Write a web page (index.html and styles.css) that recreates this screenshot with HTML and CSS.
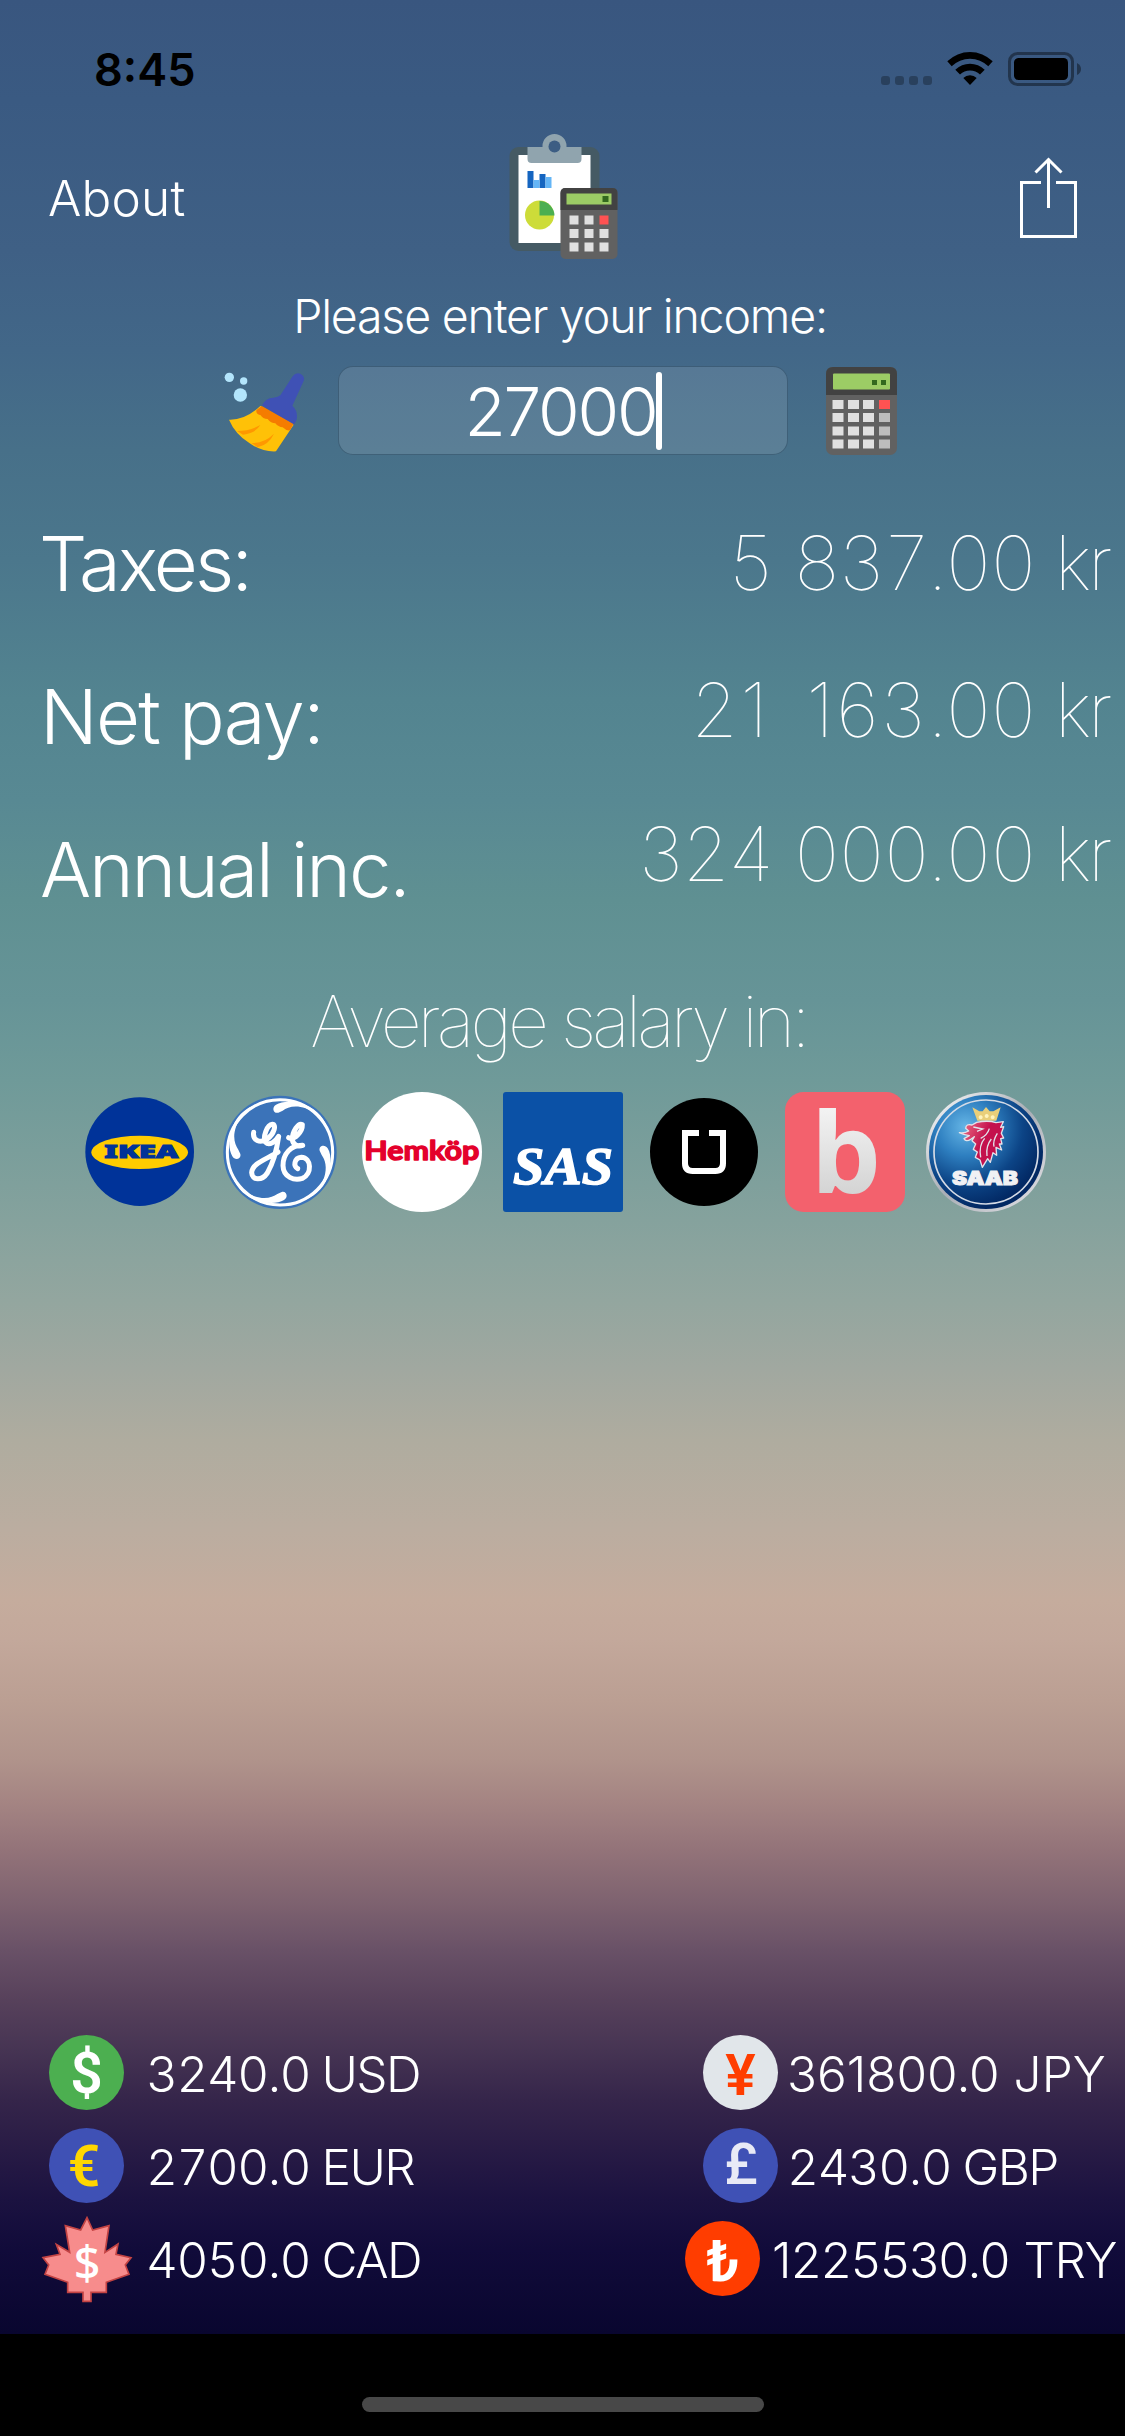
FILE: index.html
```html
<!DOCTYPE html>
<html lang="en">
<head>
<meta charset="utf-8">
<title>Income calculator</title>
<link rel="stylesheet" href="styles.css">
</head>
<body>
<div class="screen">
  <header class="status">
    <span class="time">8:45</span>
    <svg class="status-icons" width="200" height="34" viewBox="0 0 200 34">
      <g fill="#000" fill-opacity=".28"><rect x="0" y="24" width="9" height="9" rx="3"/><rect x="14" y="24" width="9" height="9" rx="3"/><rect x="28" y="24" width="9" height="9" rx="3"/><rect x="42" y="24" width="9" height="9" rx="3"/></g>
      <path d="M66.300 9.300A32.500 32.500 0 0 1 111.700 9.300L107.300 14.200A26 26 0 0 0 70.700 14.200ZM74.300 17.800A21 21 0 0 1 103.700 17.800L99 22.600A14.500 14.500 0 0 0 79 22.600ZM82.300 26A9.500 9.500 0 0 1 95.700 26L89 33Z"/>
      <rect x="128.500" y="1.500" width="63" height="31" rx="8" fill="none" stroke="#000" stroke-opacity=".4" stroke-width="3"/>
      <rect x="133" y="6" width="54" height="22" rx="4.500"/>
      <path d="M196 11Q200 13 200 17T196 23Z" fill-opacity=".4"/>
    </svg>
  </header>

  <nav class="topbar">
    <span class="about">About</span>
    <svg class="emblem" width="150" height="150" viewBox="-2.500 0 150 150">
      <rect x="19" y="26" width="90" height="104" rx="9" fill="#455a64"/>
      <rect x="28" y="34" width="72" height="88" fill="#fff"/>
      <path d="M37 26H52V25A12 12 0 0 1 76 25V26H91V38Q91 42 87 42H41Q37 42 37 38Z" fill="#90a4ae"/>
      <circle cx="64" cy="25.500" r="6" fill="#3c5d83"/>
      <path d="M37 50H43V67H37ZM49 53H55V67H49Z" fill="#1565c0"/>
      <path d="M43 59H49V67H43ZM55 56H61V67H55Z" fill="#64b5f6"/>
      <circle cx="49" cy="94" r="14.500" fill="#cddc39"/>
      <path d="M49 80A15 15 0 0 1 64 94.500H49Z" fill="#4caf50"/>
      <rect x="70" y="67" width="57" height="71" rx="5" fill="#616161"/>
      <path d="M70 89V72Q70 67 75 67H122Q127 67 127 72V89Z" fill="#424242"/>
      <rect x="76" y="72.500" width="45" height="11" fill="#9ccc65"/>
      <rect x="112" y="75" width="6" height="6" fill="#33691e"/>
      <path d="M79 94.500h9v9h-9zM94 94.500h9v9h-9zM79 108h9v9h-9zM94 108h9v9h-9zM109 108h9v9h-9zM79 121.500h9v9h-9zM94 121.500h9v9h-9zM109 121.500h9v9h-9z" fill="#e0e0e0"/>
      <rect x="109" y="94.500" width="9" height="9" fill="#ff5252"/>
    </svg>
    <svg class="share" width="57" height="82" viewBox="0 0 57 82" fill="none" stroke="#fff" stroke-width="3">
      <path d="M21 25.500H1.500V79.500H55.500V25.500H36M28.500 51V2M15.500 15.500L28.500 2.500L41.500 15.500"/>
    </svg>
  </nav>

  <p class="prompt">Please enter your income:</p>

  <div class="income">
    <svg width="90" height="89" viewBox="15 18 270 267">
      <g fill="#b3e5fc"><circle cx="43" cy="52" r="14"/><circle cx="86" cy="63" r="11"/><circle cx="76" cy="105" r="20"/></g>
      <path d="M141 136Q152 113 175 113Q190 111 196 106L233 49Q242 36 256 41Q271 49 266 63L232 137Q246 150 246 168Q246 184 235 195Z" fill="#3f51b5"/>
      <path d="M136 138L236 194L183 274Q140 276 104 250Q60 222 42 179Q90 181 136 138Z" fill="#ffc107"/>
      <path d="M140 138L235 192L225 211Q214 213 203 202Q190 201 181 190Q168 190 158 177Q143 177 137 166Q122 163 124 151Z" fill="#f57c00"/>
      <path d="M66 213Q104 213 136 195Q122 219 84 224ZM110 249Q148 250 177 221Q162 253 128 262Z" fill="#ff9800"/>
    </svg>
    <div class="field"><span class="amount">27000</span><i class="caret"></i></div>
    <svg class="calc" width="71" height="88" viewBox="0 0 71 88">
      <rect width="71" height="88" rx="7" fill="#616161"/>
      <path d="M0 28V7Q0 0 7 0H64Q71 0 71 7V28Z" fill="#424242"/>
      <rect x="7" y="6.500" width="57" height="16" rx="1" fill="#9ccc65"/>
      <path d="M46 13h5v5h-5zM55 13h5v5h-5z" fill="#33691e"/>
      <path d="M6.500 33h11v9h-11zM22 33h11v9h-11zM37 33h11v9h-11zM6.500 46h11v9h-11zM22 46h11v9h-11zM37 46h11v9h-11zM6.500 59.500h11v9h-11zM22 59.500h11v9h-11zM37 59.500h11v9h-11zM6.500 72.500h11v9h-11zM22 72.500h11v9h-11zM37 72.500h11v9h-11z" fill="#e0e0e0"/>
      <path d="M53 46h11v9h-11zM53 59.500h11v9h-11zM53 72.500h11v9h-11z" fill="#bdbdbd"/>
      <rect x="53" y="33" width="11" height="9" fill="#ff5252"/>
    </svg>
  </div>

  <section class="results">
    <div class="labels"><span class="label-taxes">Taxes:</span><span class="label-net">Net pay:</span><span>Annual inc.</span></div>
    <div class="values"><span>5 837.00 kr</span><span><b>21 163</b>.00 kr</span><span>324 000.00 kr</span></div>
  </section>

  <h2 class="average">Average salary in:</h2>

  <div class="brands">
    <svg viewBox="60 66 360 360">
      <circle cx="239" cy="245" r="163" fill="#039"/><ellipse cx="239" cy="247" rx="145" ry="50" fill="#fc0"/>
      <text class="ikea" x="133" y="263" textLength="222" lengthAdjust="spacingAndGlyphs">IKEA</text>
    </svg>
    <svg viewBox="483 66 360 360">
      <circle cx="660" cy="247" r="170" fill="#3b73b9"/>
      <circle cx="660" cy="247" r="158" fill="none" stroke="#fff" stroke-width="9"/>
      <g fill="#fff">
        <path id="swirl" d="M655 128C640 132 634 112 648 104C670 90 715 93 748 110C783 129 803 160 811 205C794 155 768 127 737 115C705 104 682 112 668 122Z"/>
        <use href="#swirl" transform="rotate(90 660 247)"/><use href="#swirl" transform="rotate(180 660 247)"/><use href="#swirl" transform="rotate(270 660 247)"/>
      </g>
      <g fill="none" stroke="#fff" stroke-width="15" stroke-linecap="round" stroke-linejoin="round">
        <path d="M581 187C577 211 600 221 622 207C643 192 650 163 637 163C621 164 607 202 617 217C628 229 648 213 656 199C651 235 641 276 622 309C606 333 576 332 575 308C577 280 615 270 654 246"/>
        <path d="M686 203C704 212 728 184 727 164C715 157 697 185 697 208C698 224 713 231 728 226C693 225 669 251 669 287C670 322 703 333 727 325C757 312 755 263 724 262C702 264 699 290 713 296"/>
      </g>
    </svg>
    <svg viewBox="906 66 360 360">
      <circle cx="1086" cy="246" r="180" fill="#fff"/>
      <text class="hemkop" x="913" y="269" textLength="345" lengthAdjust="spacingAndGlyphs">Hemköp</text>
    </svg>
    <svg viewBox="0 0 120 120">
      <rect width="120" height="120" rx="3" fill="#0b51a6"/>
      <text class="sas" x="10" y="91.500" textLength="100" lengthAdjust="spacingAndGlyphs">SAS</text>
    </svg>
    <svg viewBox="252 66 360 360">
      <circle cx="432" cy="246" r="162"/>
      <path d="M417 189H375V280Q375 303 398 303H466Q489 303 489 280V189H447" fill="none" stroke="#fff" stroke-width="18"/>
    </svg>
    <svg viewBox="675 66 360 360">
      <defs><linearGradient id="steel" x1="0" y1="0" x2="0" y2="1"><stop offset="0" stop-color="#fff"/><stop offset="1" stop-color="#c8c8c8"/></linearGradient></defs>
      <rect x="675" y="66" width="360" height="360" rx="56" fill="#f3616d"/>
      <text class="booking" x="752" y="370" fill="url(#steel)">b</text>
    </svg>
    <svg viewBox="1098 66 360 360">
      <defs>
        <radialGradient id="sea" cx=".32" cy=".28" r=".72"><stop offset="0" stop-color="#66b6e6"/><stop offset=".35" stop-color="#2e7fc0"/><stop offset=".7" stop-color="#0c4486"/><stop offset="1" stop-color="#022863"/></radialGradient>
        <linearGradient id="rim" x1="0" y1="0" x2="1" y2="1"><stop offset="0" stop-color="#fff"/><stop offset=".5" stop-color="#a9adb5"/><stop offset="1" stop-color="#e6e6ea"/></linearGradient>
        <linearGradient id="mane" x1="0" y1="0" x2="1" y2=".5"><stop offset="0" stop-color="#f0788a"/><stop offset=".6" stop-color="#c4114d"/></linearGradient>
      </defs>
      <circle cx="1278" cy="246" r="180" fill="url(#rim)"/>
      <circle cx="1278" cy="246" r="171" fill="url(#sea)"/>
      <circle cx="1278" cy="246" r="156" fill="none" stroke="#d5dbe6" stroke-width="5"/>
      <path d="M1252 152L1237 112L1258 124L1268 124L1278 111L1289 124L1300 124L1322 112L1309 152Z" fill="#e9cf7a"/>
      <path d="M1262 136a6 6 0 1 0 .1 0M1280 132a6 6 0 1 0 .1 0M1298 136a6 6 0 1 0 .1 0" fill="#fff4bd"/>
      <path d="M1250 157Q1285 150 1308 158L1330 155L1322 172L1331 170L1324 190L1331 204L1322 206L1326 222L1318 222L1325 240L1308 232L1310 256L1299 248L1291 277L1283 266L1267 292L1260 270L1246 262L1252 246L1240 238L1247 222L1236 212L1243 200L1232 208Q1218 217 1212 206L1228 197Q1215 196 1198 188Q1214 190 1226 183L1217 175Q1218 160 1236 165Z" fill="url(#mane)" stroke="#e3e3ea" stroke-width="4" stroke-linejoin="round"/>
      <path d="M1240 171L1268 177L1251 184M1262 262Q1256 225 1274 205M1281 258Q1277 228 1294 207M1302 230Q1298 212 1312 190M1262 205Q1282 196 1288 176" fill="none" stroke="#e3e3ea" stroke-width="4"/>
      <text class="saab" x="1176" y="346" textLength="198" lengthAdjust="spacingAndGlyphs">SAAB</text>
    </svg>
  </div>

  <section class="rates">
    <div class="rate-col">
      <div class="rate"><svg viewBox="0 0 75 75"><circle cx="37.500" cy="37.500" r="37.500" fill="#4caf50"/><text x="37.500" y="58" fill="#fff">$</text></svg><span>3240.0 USD</span></div>
      <div class="rate"><svg viewBox="0 0 75 75"><circle cx="37.500" cy="37.500" r="37.500" fill="#3f51b5"/><text x="35" y="58" fill="#ffd600">€</text></svg><span>2700.0 EUR</span></div>
      <div class="rate"><svg viewBox="27 588 225 225"><path d="M141 578L158 615L207 602L195 682L234 657L228 688L273 698L256 720L267 748L199 772V802H153V829H129V802H83V772L15 748L26 720L9 698L60 688L49 658L89 682L76 602L122 615Z" fill="#f78c8c" stroke="#c34343" stroke-width="5"/><text class="cad" x="141" y="764" fill="#fff">$</text></svg><span>4050.0 CAD</span></div>
    </div>
    <div class="rate-col right">
      <div class="rate jpy"><svg viewBox="0 0 75 75"><circle cx="37.500" cy="37.500" r="37.500" fill="#e1e6ea"/><text x="37.500" y="60" fill="#ff3d00">¥</text></svg><span>361800.0 JPY</span></div>
      <div class="rate"><svg viewBox="0 0 75 75"><circle cx="37.500" cy="37.500" r="37.500" fill="#3f51b5"/><text class="pound" x="38" y="56" fill="#e8eaf6">£</text></svg><span>2430.0 GBP</span></div>
      <div class="rate try"><svg viewBox="0 0 75 75"><circle cx="37.500" cy="37.500" r="37.500" fill="#ff3d00"/><text x="38" y="60" fill="#fff">₺</text></svg><span>1225530.0 TRY</span></div>
    </div>
  </section>
</div>
<footer class="home"><div class="home-bar"></div></footer>
</body>
</html>
```
FILE: styles.css
```css
body {
  margin: 0;
  width: 1125px;
  height: 2436px;
  overflow: hidden;
  background: #000;
  color: #fff;
  font-family: Inter, "Liberation Sans", sans-serif;
  font-weight: 300;
}
svg { display: block; flex: none; }
.screen {
  height: 2334px;
  display: flex;
  flex-direction: column;
  background: linear-gradient(#39567f 0, #3a5a82 100px, #3f6085 250px, #426788 350px, #477089 450px, #4b778c 560px, #538490 700px, #588993 800px, #5f9092 900px, #669497 1000px, #6f9a99 1080px, #85a29d 1220px, #93a69f 1300px, #a1a8a0 1370px, #afac9f 1440px, #bbada0 1530px, #c5ac9d 1600px, #c3a89b 1640px, #bb9f93 1700px, #b0938b 1760px, #a58583 1800px, #937379 1850px, #7f6370 1900px, #695167 1950px, #57415b 2000px, #463453 2050px, #35254a 2100px, #281b45 2150px, #1b1240 2200px, #110b3a 2250px, #09062f 2334px);
}
.status {
  box-sizing: border-box;
  height: 120px;
  padding: 43px 44px 0 94px;
  display: flex;
  justify-content: space-between;
  align-items: flex-start;
  color: #000;
}
.time { font-size: 45px; line-height: 54px; font-weight: 600; }
.status-icons { margin-top: 9px; }
.topbar {
  height: 166px;
  padding: 0 48px;
  display: grid;
  grid-template-columns: 1fr auto 1fr;
  align-items: start;
}
.emblem { margin-top: 1px; }
.about { margin-top: 48px; font-size: 49.5px; line-height: 60px; font-weight: 350; letter-spacing: .2px; }
.share { margin-top: 37px; justify-self: end; }
.prompt { margin: 0; padding-right: 5px; text-align: center; font-size: 46.5px; line-height: 60px; letter-spacing: -1.2px; }
.income { margin: 20px 0 0 220px; display: flex; height: 89px; }
.field {
  box-sizing: border-box;
  width: 450px;
  margin: 0 38px 0 28px;
  border: 1px solid rgba(30, 60, 85, .45);
  border-radius: 15px;
  background: rgba(255, 255, 255, .11);
  display: flex;
  justify-content: center;
  align-items: center;
}
.calc { margin-top: 1px; }
.amount { padding-top: 2px; font-size: 67.5px; line-height: 80px; letter-spacing: -2.2px; }
.caret { width: 6px; height: 78px; margin-left: -1px; border-radius: 3px; background: #fff; }
.results { margin-top: 62px; padding: 0 14px 0 40px; display: flex; justify-content: space-between; font-size: 76px; line-height: 92px; }
.labels, .values { display: flex; flex-direction: column; }
.labels { gap: 61px; letter-spacing: -2.2px; }
.label-taxes { margin-left: -1px; letter-spacing: -2.8px; }
.label-net { letter-spacing: -1.7px; }
.values { gap: 55px; align-items: flex-end; font-weight: 100; font-size: 75px; font-variant-numeric: tabular-nums; letter-spacing: -3.4px; word-spacing: 4px; }
.values span { margin-right: 2px; }
.values b { font-weight: 100; font-variant-numeric: normal; letter-spacing: 2.6px; word-spacing: 12px; }
.values span:last-child { margin-top: -3px; }
.average { margin: 63px 0 0; padding-right: 8px; text-align: center; font-size: 71.5px; line-height: 86px; font-weight: 100; letter-spacing: -4px; }
.brands { margin: 28px 79px 0 80px; display: flex; justify-content: space-between; }
.brands svg { width: 120px; height: 120px; overflow: visible; }
.ikea { font: 900 54px "Noto Sans", sans-serif; fill: #039; stroke: #039; stroke-width: 3px; }
.hemkop { font: 700 78px Lato, sans-serif; fill: #e4002b; stroke: #e4002b; stroke-width: 4px; stroke-linejoin: round; }
.sas { font: italic bold 53px "Liberation Serif", serif; fill: #fff; stroke: #fff; stroke-width: 1.5px; }
.booking { font: bold 333px "Open Sans", sans-serif; }
.saab { font: 900 56px Inter, sans-serif; fill: #f1f1f4; stroke: #f1f1f4; stroke-width: 3px; }
.rates { margin: auto 0 38px; padding-left: 49px; display: flex; }
.rate-col { width: 654px; display: flex; flex-direction: column; gap: 18px; }
.rate-col.right { width: 422px; }
.rate { display: flex; height: 75px; align-items: center; font-size: 49.5px; line-height: 60px; white-space: nowrap; letter-spacing: -1.6px; font-variant-numeric: tabular-nums; }
.rate svg { width: 75px; height: 75px; overflow: visible; font: 600 57px Roboto, sans-serif; text-anchor: middle; letter-spacing: 0; }
.rate .pound { font-weight: 500; }
.rate .cad { font: 500 140px "Noto Sans", sans-serif; }
.rate span { margin-left: 22px; padding-top: 3px; }
.right .rate span { margin-left: 9px; }
.right .jpy span { font-variant-numeric: normal; letter-spacing: 0; }
.rate.try { margin-left: -18px; }
.right .try span { margin-left: 12px; font-variant-numeric: normal; letter-spacing: -.4px; }
.home { height: 102px; display: flex; justify-content: center; align-items: flex-start; }
.home-bar { margin-top: 63px; width: 402px; height: 15px; border-radius: 8px; background: #484848; }
```
